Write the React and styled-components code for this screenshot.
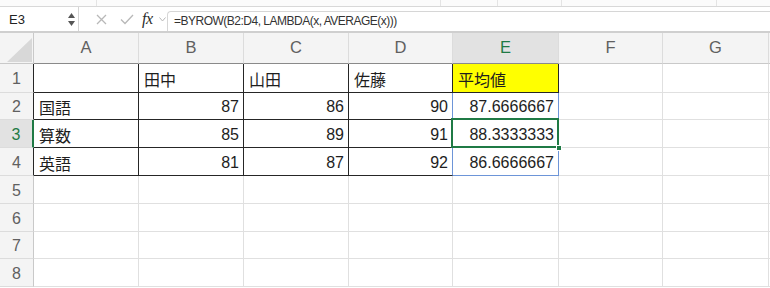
import React from 'react';
import styled, { createGlobalStyle, css } from 'styled-components';

const GlobalStyle = createGlobalStyle`
  html, body {
    margin: 0;
    padding: 0;
    background: #ffffff;
    overflow: hidden;
  }
  body {
    font-family: "Liberation Sans", "Noto Sans CJK JP", sans-serif;
    color: #222;
  }
  * { box-sizing: border-box; }
`;

const GRID = '#e0e0e0';
const INK = '#262626';
const SPILL = '#6d95d8';
const PICK = '#1f7a45';

const Window = styled.div`
  width: 770px;
  height: 288px;
  overflow: hidden;
  display: flex;
  flex-direction: column;
  & > * { flex-shrink: 0; }
`;

const TopStrip = styled.div`
  height: 7px;
  display: flex;
  border-bottom: 1px solid #d8d8d8;
  background: #fbfbfb;
`;

const StripPart = styled.div`
  width: ${(p) => p.$w}px;
  border-right: 1px solid #e4e4e4;
`;

const FormulaBar = styled.div`
  height: 26px;
  display: flex;
  align-items: stretch;
  border-bottom: 2px solid #cfcfcf;
  background: #ffffff;
`;

const NameBox = styled.div`
  width: 79px;
  display: flex;
  align-items: center;
  justify-content: space-between;
  padding: 0 2px 0 9px;
  border-right: 1px solid #d4d4d4;
  font-size: 13px;
  color: #222;
`;

const Spinner = styled.div`
  display: flex;
  flex-direction: column;
  gap: 3px;
  margin-right: 1px;
`;

const Tools = styled.div`
  width: 88px;
  display: flex;
  align-items: center;
  padding-left: 12px;
`;

const ToolIcon = styled.span`
  display: flex;
  align-items: center;
  justify-content: center;
  width: ${(p) => p.$w}px;
`;

const Fx = styled.span`
  font-family: "Liberation Serif", serif;
  font-style: italic;
  font-size: 16px;
  color: #2b2b2b;
  letter-spacing: -0.5px;
  width: 16px;
  margin-left: 1px;
`;

const FormulaInput = styled.div`
  flex: 1;
  margin-top: 4px;
  border-top: 1px solid #d6d6d6;
  border-left: 1px solid #d6d6d6;
  border-top-left-radius: 4px;
  display: flex;
  align-items: center;
  padding: 0 0 1px 6px;
  font-size: 12px;
  letter-spacing: -0.5px;
  color: #333;
`;

const Sheet = styled.div`
  display: grid;
  grid-template-columns: 34px 105px 105px 105px 104px 106px 104px 106px 20px;
  grid-template-rows: 31px 29px 27px 28px 28px 28px 28px 27px 28px;
`;

const Cell = styled.div`
  position: relative;
  display: flex;
  align-items: center;
  justify-content: ${(p) => (p.$num ? 'flex-end' : 'flex-start')};
  padding: 2px ${(p) => (p.$num ? '4px' : '0')} 0 ${(p) => (p.$num ? '0' : '5px')};
  background: ${(p) => p.$bg || '#ffffff'};
  border-right: 1px solid ${(p) => p.$r || GRID};
  border-bottom: 1px solid ${(p) => p.$b || GRID};
  font-size: 16px;
  color: #1e1e1e;
  white-space: nowrap;
`;

const headerBase = css`
  display: flex;
  align-items: center;
  justify-content: center;
  background: ${(p) => (p.$active ? '#e2e2e2' : '#f4f4f4')};
  color: ${(p) => (p.$active ? PICK : '#606060')};
  font-size: 16.5px;
`;

const ColHeader = styled.div`
  ${headerBase};
  border-right: 1px solid #dcdcdc;
  border-bottom: 1px solid ${(p) => p.$b || '#c9c9c9'};
  padding-bottom: 1px;
`;

const RowHeader = styled.div`
  ${headerBase};
  font-size: 16px;
  padding-top: 2px;
  border-right: ${(p) => (p.$active ? `2px solid ${PICK}` : `1px solid ${p.$r || '#c9c9c9'}`)};
  border-bottom: 1px solid #dcdcdc;
`;

const Corner = styled.div`
  background: #f4f4f4;
  border-right: 1px solid #c9c9c9;
  border-bottom: 1px solid #c9c9c9;
  display: flex;
  align-items: flex-end;
  justify-content: flex-end;
  padding: 0 1px 1px 0;
`;

const Selection = styled.div`
  position: absolute;
  left: -2px;
  top: -2px;
  right: -1px;
  bottom: -1px;
  border: 2px solid ${PICK};
  pointer-events: none;
  z-index: 2;
`;

const Handle = styled.div`
  position: absolute;
  right: -5px;
  bottom: -5px;
  width: 6px;
  height: 6px;
  background: ${PICK};
  border: 1px solid #ffffff;
`;

const columns = ['A', 'B', 'C', 'D', 'E', 'F', 'G', ''];

const data = [
  ['', '田中', '山田', '佐藤', '平均値'],
  ['国語', 87, 86, 90, '87.6666667'],
  ['算数', 85, 89, 91, '88.3333333'],
  ['英語', 81, 87, 92, '86.6666667'],
];

// border colours for a given cell (row 1-based, col 0-based A=0)
const edges = (r, c) => {
  let right = GRID;
  let bottom = GRID;
  if (r >= 1 && r <= 4 && c <= 3) {
    right = INK;
    bottom = INK;
  }
  if (c === 3 && r >= 2 && r <= 4) right = SPILL;
  if (c === 4 && r === 1) {
    right = INK;
    bottom = INK;
  }
  if (c === 4 && r >= 2 && r <= 4) right = SPILL;
  if (c === 4 && r === 4) bottom = SPILL;
  return { right, bottom };
};

const Spin = () => (
  <Spinner>
    <svg width="7" height="5" viewBox="0 0 7 5">
      <path d="M3.5 0 L7 5 L0 5 Z" fill="#555" />
    </svg>
    <svg width="7" height="5" viewBox="0 0 7 5">
      <path d="M0 0 L7 0 L3.5 5 Z" fill="#555" />
    </svg>
  </Spinner>
);

export default function App() {
  const rows = [1, 2, 3, 4, 5, 6, 7, 8];
  return (
    <Window>
      <GlobalStyle />
      <TopStrip>
        <StripPart $w={97} />
        <StripPart $w={344} />
        <StripPart $w={57} />
        <StripPart $w={64} />
        <StripPart $w={155} />
      </TopStrip>
      <FormulaBar>
        <NameBox>
          <span>E3</span>
          <Spin />
        </NameBox>
        <Tools>
          <ToolIcon $w={22}>
            <svg width="11" height="11" viewBox="0 0 11 11">
              <path d="M1 1 L10 10 M10 1 L1 10" stroke="#b8b8b8" strokeWidth="1.3" fill="none" />
            </svg>
          </ToolIcon>
          <ToolIcon $w={30}>
            <svg width="14" height="11" viewBox="0 0 14 11">
              <path d="M1 5.5 L5 9.5 L13 1" stroke="#b8b8b8" strokeWidth="1.3" fill="none" />
            </svg>
          </ToolIcon>
          <Fx>fx</Fx>
          <ToolIcon $w={10}>
            <svg width="7" height="5" viewBox="0 0 7 5">
              <path d="M0.5 0.5 L3.5 4 L6.5 0.5" stroke="#b8b8b8" strokeWidth="1" fill="none" />
            </svg>
          </ToolIcon>
        </Tools>
        <FormulaInput>=BYROW(B2:D4, LAMBDA(x, AVERAGE(x)))</FormulaInput>
      </FormulaBar>
      <Sheet>
        <Corner>
          <svg width="25" height="24" viewBox="0 0 25 24">
            <path d="M25 0 L25 24 L0 24 Z" fill="#d8d8d8" />
          </svg>
        </Corner>
        {columns.map((col, c) => (
          <ColHeader key={col || 'x'} $active={col === 'E'} $b={c <= 4 ? '#8a8a8a' : undefined}>
            {col}
          </ColHeader>
        ))}
        {rows.map((r) => (
          <React.Fragment key={r}>
            <RowHeader $active={r === 3} $r={r <= 4 ? INK : undefined}>
              {r}
            </RowHeader>
            {columns.map((col, c) => {
              const v = r <= 4 && c <= 4 ? data[r - 1][c] : '';
              const { right, bottom } = edges(r, c);
              const num = r >= 2 && r <= 4 && c >= 1 && c <= 4;
              return (
                <Cell
                  key={col || 'x'}
                  $num={num}
                  $r={right}
                  $b={bottom}
                  $bg={r === 1 && c === 4 ? '#ffff00' : undefined}
                >
                  {v}
                  {r === 3 && c === 4 && (
                    <Selection>
                      <Handle />
                    </Selection>
                  )}
                </Cell>
              );
            })}
          </React.Fragment>
        ))}
      </Sheet>
    </Window>
  );
}
